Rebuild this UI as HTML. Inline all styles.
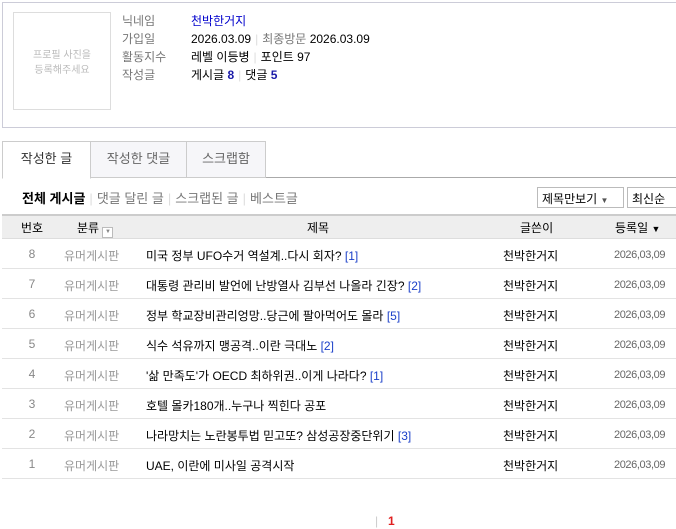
<!DOCTYPE html>
<html><head><meta charset="utf-8"><style>
*{margin:0;padding:0;box-sizing:border-box}
body{width:676px;height:529px;background:#fff;font-family:"Liberation Sans","Noto Sans CJK KR",sans-serif;font-size:12px;color:#000;position:relative;overflow:hidden}
.a{position:absolute;white-space:nowrap}
.box{left:2px;top:2px;width:676px;height:126px;border:1px solid #ccccd8}
.pic{left:13px;top:12px;width:98px;height:98px;border:1px solid #ddd;color:#bbb;font-size:10px;text-align:center;line-height:15px;padding-top:35px}
.lb{left:122px;color:#777}
.v{left:191px}
.sep{color:#ddd;margin:0 4px}
.tab{top:141px;height:37px;border:1px solid #ccc;background:#f6f6f9;color:#666;text-align:center;line-height:34px;font-size:13px}
.row{left:2px;width:674px;height:30px;border-bottom:1px solid #e3e3e3}
.n{width:60px;text-align:center;color:#888;top:8px}
.c{left:62px;color:#999;top:8px}
.t{left:144px;top:8px}
.w{left:501px;top:8px}
.d{left:612px;top:10px;font-size:11px;color:#666;letter-spacing:-0.4px}
.cm{color:#1a3fc8}
</style></head><body>
<div class="a box"></div>
<div class="a pic">프로필 사진을<br>등록해주세요</div>
<div class="a lb" style="top:12px">닉네임</div><div class="a v" style="top:12px;color:#0000cc">천박한거지</div>
<div class="a lb" style="top:30px">가입일</div><div class="a v" style="top:30px">2026.03.09<span class="sep">|</span><span style="color:#777">최종방문</span> 2026.03.09</div>
<div class="a lb" style="top:48px">활동지수</div><div class="a v" style="top:48px">레벨 이등병<span class="sep">|</span>포인트 97</div>
<div class="a lb" style="top:66px">작성글</div><div class="a v" style="top:66px">게시글 <b style="color:#1a1aa8">8</b><span class="sep">|</span>댓글 <b style="color:#1a1aa8">5</b></div>

<div class="a" style="left:2px;top:177px;width:674px;border-top:1px solid #aaa"></div>
<div class="a tab" style="left:2px;width:89px;background:#fff;color:#333;border-bottom:1px solid #fff;height:38px">작성한 글</div>
<div class="a tab" style="left:90px;width:97px">작성한 댓글</div>
<div class="a tab" style="left:186px;width:80px">스크랩함</div>

<div class="a" style="left:22px;top:188px;font-size:13px"><b>전체 게시글</b><span class="sep">|</span><span style="color:#777">댓글 달린 글</span><span class="sep">|</span><span style="color:#777">스크랩된 글</span><span class="sep">|</span><span style="color:#777">베스트글</span></div>
<div class="a" style="left:537px;top:187px;width:87px;height:21px;border:1px solid #bbb;padding:2px 4px;font-size:12px">제목만보기 <span style="font-size:8px;color:#555">▼</span></div>
<div class="a" style="left:627px;top:187px;width:52px;height:21px;border:1px solid #bbb;padding:2px 4px">최신순</div>

<div class="a" style="left:2px;top:214px;width:674px;height:25px;background:#eeeeee;border-top:2px solid #ccc;border-bottom:1px solid #ddd"></div>
<div class="a" style="left:2px;top:219px;width:60px;text-align:center">번호</div>
<div class="a" style="left:77px;top:219px">분류 <span style="display:inline-block;width:11px;height:11px;border:1px solid #bbb;background:#fff;font-size:6px;color:#888;text-align:center;line-height:9px;vertical-align:-1px">▼</span></div>
<div class="a" style="left:307px;top:219px">제목</div>
<div class="a" style="left:520px;top:219px">글쓴이</div>
<div class="a" style="left:615px;top:219px">등록일 <span style="font-size:9px">▼</span></div>

<div class="a row" style="top:239px"><div class="a n">8</div><div class="a c">유머게시판</div><div class="a t">미국 정부 UFO수거 역설계..다시 회자? <span class="cm">[1]</span></div><div class="a w">천박한거지</div><div class="a d">2026,03,09</div></div>
<div class="a row" style="top:269px"><div class="a n">7</div><div class="a c">유머게시판</div><div class="a t">대통령 관리비 발언에 난방열사 김부선 나올라 긴장? <span class="cm">[2]</span></div><div class="a w">천박한거지</div><div class="a d">2026,03,09</div></div>
<div class="a row" style="top:299px"><div class="a n">6</div><div class="a c">유머게시판</div><div class="a t">정부 학교장비관리엉망..당근에 팔아먹어도 몰라 <span class="cm">[5]</span></div><div class="a w">천박한거지</div><div class="a d">2026,03,09</div></div>
<div class="a row" style="top:329px"><div class="a n">5</div><div class="a c">유머게시판</div><div class="a t">식수 석유까지 맹공격..이란 극대노 <span class="cm">[2]</span></div><div class="a w">천박한거지</div><div class="a d">2026,03,09</div></div>
<div class="a row" style="top:359px"><div class="a n">4</div><div class="a c">유머게시판</div><div class="a t">'삶 만족도'가 OECD 최하위권..이게 나라다? <span class="cm">[1]</span></div><div class="a w">천박한거지</div><div class="a d">2026,03,09</div></div>
<div class="a row" style="top:389px"><div class="a n">3</div><div class="a c">유머게시판</div><div class="a t">호텔 몰카180개..누구나 찍힌다 공포</div><div class="a w">천박한거지</div><div class="a d">2026,03,09</div></div>
<div class="a row" style="top:419px"><div class="a n">2</div><div class="a c">유머게시판</div><div class="a t">나라망치는 노란봉투법 믿고또? 삼성공장중단위기 <span class="cm">[3]</span></div><div class="a w">천박한거지</div><div class="a d">2026,03,09</div></div>
<div class="a row" style="top:449px"><div class="a n">1</div><div class="a c">유머게시판</div><div class="a t">UAE, 이란에 미사일 공격시작</div><div class="a w">천박한거지</div><div class="a d">2026,03,09</div></div>

<div class="a" style="left:375px;top:514px;color:#ccc">|</div>
<div class="a" style="left:388px;top:514px;color:#e02020;font-weight:bold">1</div>
</body></html>
